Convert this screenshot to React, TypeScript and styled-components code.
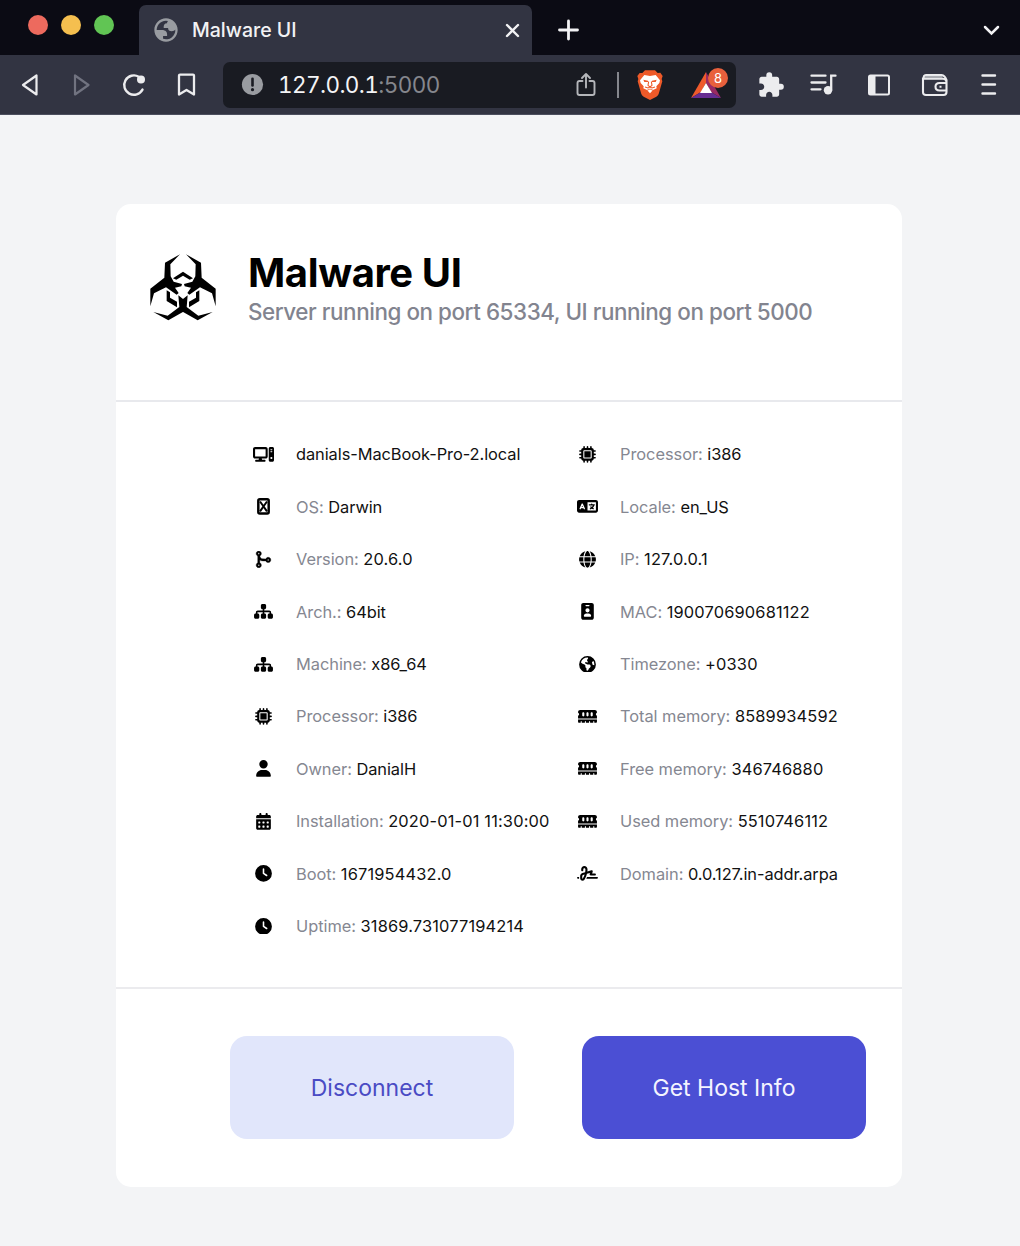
import React from "react";
import styled, { createGlobalStyle } from "styled-components";
import {
  FaComputer, FaCodeMerge, FaSitemap, FaMicrochip, FaUser, FaCalendarDays, FaClock,
  FaLanguage, FaGlobe, FaIdBadge, FaEarthAmericas, FaMemory, FaSignature,
} from "react-icons/fa6";
import { MdExtension } from "react-icons/md";

const GlobalStyle = createGlobalStyle`
  * { box-sizing: border-box; }
  html, body { margin: 0; background: #f3f4f6; }
  body { font-family: Inter, "Liberation Sans", sans-serif; }
`;

const Window = styled.div`
  width: 1020px;
  height: 1246px;
  display: flex;
  flex-direction: column;
  overflow: hidden;
  background: #f3f4f6;
`;

const TabStrip = styled.div`
  height: 55px;
  display: flex;
  align-items: flex-start;
  background: #0b0b14;
  color: #f2f2f4;
`;

const Lights = styled.div`
  display: flex;
  gap: 13px;
  width: 139px;
  padding: 15px 0 0 28px;
`;

const Light = styled.span<{ $color: string }>`
  width: 20px;
  height: 20px;
  border-radius: 50%;
  background: ${(p) => p.$color};
`;

const Tab = styled.div`
  width: 393px;
  height: 50px;
  margin-top: 5px;
  padding: 0 12px 0 13px;
  display: flex;
  align-items: center;
  border-radius: 7px 7px 0 0;
  background: #323442;
`;

const TabTitle = styled.span`
  flex: 1;
  margin-left: 12px;
  font-size: 19.5px;
  font-weight: 500;
`;

const StripActions = styled.div`
  flex: 1;
  height: 60px;
  padding: 0 20px 0 25px;
  display: flex;
  align-items: center;
  justify-content: space-between;
`;

const Toolbar = styled.div`
  height: 60px;
  display: flex;
  align-items: center;
  background: #323442;
  border-bottom: 1px solid #4c4f5e;
  color: #ececee;
`;

const NavGroup = styled.div`
  width: 223px;
  padding-left: 18px;
  display: flex;
  gap: 27px;
`;

const AddressBar = styled.div`
  width: 513px;
  height: 46px;
  padding: 0 5px 0 18px;
  display: flex;
  align-items: center;
  border-radius: 7px;
  background: #191b22;
`;

const Url = styled.span`
  flex: 1;
  margin-left: 14px;
  font-size: 22.5px;
  font-variant-numeric: tabular-nums;
  letter-spacing: -0.6px;
  color: #f4f4f6;
`;

const Port = styled.span`
  color: #85878d;
`;

const Divider = styled.span`
  width: 2px;
  height: 26px;
  margin: 0 18px 0 21px;
  background: #85878d;
`;

const Rewards = styled.div`
  position: relative;
  width: 40px;
  height: 34px;
  margin-left: 28px;
`;

const Badge = styled.span`
  position: absolute;
  top: 0;
  left: 17px;
  width: 20px;
  height: 20px;
  border-radius: 50%;
  background: #e8603c;
  color: #fff;
  font-size: 13px;
  line-height: 20px;
  text-align: center;
`;

const ToolGroup = styled.div`
  flex: 1;
  padding: 0 6px 0 9px;
  display: flex;
`;

const ToolCell = styled.span<{ $nudge?: number }>`
  flex: 1;
  height: 34px;
  padding-right: ${(p) => p.$nudge ?? 0}px;
  display: flex;
  align-items: center;
  justify-content: center;
`;

const Page = styled.main`
  flex: 1;
  padding: 89px 118px 0 116px;
`;

const Card = styled.section`
  height: 983px;
  display: flex;
  flex-direction: column;
  border-radius: 15px;
  background: #fff;
`;

const CardHeader = styled.header`
  height: 198px;
  padding: 48px 0 0 32px;
  display: flex;
  border-bottom: 2px solid #e8e9ed;
`;

const Logo = styled.svg`
  width: 70px;
  height: 70px;
  margin-top: 1px;
`;

const Heading = styled.div`
  margin-left: 30px;
`;

const Title = styled.h1`
  margin: 0;
  font-size: 40px;
  line-height: 42px;
  font-weight: 700;
  letter-spacing: -0.4px;
  color: #000;
`;

const Subtitle = styled.p`
  margin: 3px 0 0;
  font-size: 22.4px;
  line-height: 30px;
  font-weight: 450;
  letter-spacing: -0.43px;
  color: #82848f;
  white-space: nowrap;
`;

const Details = styled.div`
  height: 587px;
  padding: 26.3px 0 0 131px;
  display: grid;
  grid-template-columns: 324px 1fr;
  align-items: start;
  border-bottom: 2px solid #ebebee;
`;

const Row = styled.div`
  height: 52.4px;
  display: flex;
  align-items: center;
  font-size: 16.4px;
  white-space: nowrap;
  color: #111;
`;

const IconCell = styled.span`
  width: 32px;
  margin-right: 17px;
  display: flex;
  justify-content: center;
  color: #000;
  svg { height: 16.8px; width: 21px; }
`;

const Label = styled.span`
  margin-right: 4.6px;
  letter-spacing: -0.04px;
  color: #858791;
`;

const Value = styled.span<{ $numeric: boolean }>`
  letter-spacing: ${(p) => (p.$numeric ? "0.16px" : "-0.07px")};
`;

const Actions = styled.footer`
  flex: 1;
  padding: 47px 36px 0 114px;
  display: flex;
  justify-content: space-between;
`;

const Button = styled.button<{ $primary?: boolean }>`
  width: 284px;
  height: 103px;
  padding: 0;
  border: 0;
  border-radius: 17px;
  font-family: inherit;
  font-size: 23px;
  background: ${(p) => (p.$primary ? "#4b4fd4" : "#e1e6fb")};
  color: ${(p) => (p.$primary ? "#f4f4ff" : "#4a4bc4")};
`;

const Biohazard = () => (
  <Logo viewBox="24 24 210 210">
    <defs>
      <g id="half">
        <path d="M120 28L75 53L73 98L31 131L31 184L42 145L78 127L110 149L116 144L105 128L124 124L126 117L101 110L92 94L91 58Z" />
        <path d="M80 136L90 142V158L111 170V187L80 168Z" />
        <path d="M99 100L129 80V92L109 104Z" />
        <path d="M40 201L85 226L130 200V163L115 151L118 186L83 212Z" />
      </g>
    </defs>
    <use href="#half" />
    <use href="#half" transform="translate(258 0) scale(-1 1)" />
  </Logo>
);

const BoxedX = () => (
  <svg viewBox="0 0 26 34">
    <rect x="2.500" y="2.500" width="21" height="29" rx="3" fill="none" stroke="currentColor" strokeWidth="5" />
    <path d="M6 7L20 27M20 7L6 27" fill="none" stroke="currentColor" strokeWidth="4" />
  </svg>
);

const Globe = () => (
  <svg width="28" height="28" viewBox="0 0 24 24">
    <path
      fill="#999ca1"
      fillRule="evenodd"
      d="M12 2C6.480 2 2 6.480 2 12s4.480 10 10 10 10-4.480 10-10S17.520 2 12 2zM4 12h4.400c3.407.022 4.922 1.730 4.543 5.127H9.488v2.470a8.004 8.004 0 0 0 10.498-8.080C19.327 12.500 18.332 13 17 13c-2.137 0-3.206-.916-3.206-2.750h-3.748c-.274-2.728.683-4.092 2.870-4.092 0-.975.327-1.597.811-1.970A8.004 8.004 0 0 0 4 12z"
    />
  </svg>
);

const Back = ({ dim }: { dim?: boolean }) => (
  <svg width="24" height="26" viewBox="0 0 24 26" fill="none" stroke={dim ? "#717380" : "#ececee"} strokeWidth="2.200" strokeLinejoin="round">
    <path d={dim ? "M6 3.500V22.500L19.500 13Z" : "M18.500 3.500V22.500L5 13Z"} />
  </svg>
);

const Reload = () => (
  <svg width="28" height="26" viewBox="0 0 28 26">
    <path d="M18.800 4.700A9.700 9.700 0 1 0 22.500 17.600" fill="none" stroke="currentColor" strokeWidth="2.400" strokeLinecap="round" />
    <circle cx="21" cy="7.500" r="4" fill="currentColor" />
  </svg>
);

const Bookmark = () => (
  <svg width="24" height="26" viewBox="0 0 24 26" fill="none" stroke="currentColor" strokeWidth="2.300" strokeLinejoin="round">
    <path d="M4 3.500Q4 2.700 5 2.700H18Q19 2.700 19 3.500V22.500L11.500 18L4 22.500Z" />
  </svg>
);

const Info = () => (
  <svg width="23" height="23" viewBox="0 0 23 23">
    <circle cx="11.500" cy="11.500" r="10.600" fill="#999ca1" />
    <path d="M11.500 5.800V12.500" stroke="#191b22" strokeWidth="2.600" strokeLinecap="round" />
    <circle cx="11.500" cy="16.700" r="1.600" fill="#191b22" />
  </svg>
);

const Share = () => (
  <svg width="20" height="26" viewBox="0 0 20 26" fill="none" stroke="#b4b6ba" strokeWidth="1.900" strokeLinejoin="round" strokeLinecap="round">
    <path d="M6.500 9H3.500Q1.500 9 1.500 11V21Q1.500 23 3.500 23H16.500Q18.500 23 18.500 21V11Q18.500 9 16.500 9H13.500" />
    <path d="M10 15.500V2.500M6 6L10 2L14 6" />
  </svg>
);

const Lion = () => (
  <svg width="26" height="30" viewBox="0 0 78 90">
    <path d="M24 1H54L62 9L70 8L77 18L74 27L76 34L65 72Q63 77 58 80L39 90L20 80Q15 77 13 72L2 34L4 27L1 18L8 9L16 9Z" fill="#ee5a29" />
    <path d="M22 15L39 18L56 15L69 31L67 39L58 49L59 55L48 60L39 70L30 60L19 55L20 49L11 39L9 31Z" fill="#fff" />
    <path d="M19 29L33 32L34 36L22 36ZM59 29L45 32L44 36L56 36Z" fill="#ee5a29" />
    <path d="M35 35L33 46L39 51L45 46L43 35M24 51L33 54L39 51L45 54L54 51" fill="none" stroke="#ee5a29" strokeWidth="3.200" />
    <path d="M30 61L39 57L48 61" fill="none" stroke="#ee5a29" strokeWidth="2.400" />
  </svg>
);

const Triangle = () => (
  <svg width="30" height="27" viewBox="0 0 30 27" style={{ marginTop: 4 }}>
    <path d="M15 0L0 26L10 20L15 11Z" fill="#ee5a2c" />
    <path d="M15 0L30 26L20 20L15 11Z" fill="#9a2a63" />
    <path d="M0 26H30L20 20H10Z" fill="#662d91" />
    <path d="M15 11L9 21H21Z" fill="#fff" />
  </svg>
);

const Playlist = () => (
  <svg width="28" height="24" viewBox="0 0 28 24" fill="none" stroke="currentColor" strokeWidth="2.300" strokeLinecap="round">
    <path d="M2.500 2.700H16.500M2.500 9.500H16.500M2.500 16.300H11.500M26.500 2.700H22.200V17" />
    <circle cx="19" cy="17.300" r="4.200" fill="currentColor" stroke="none" />
  </svg>
);

const SidePanel = () => (
  <svg width="24" height="24" viewBox="0 0 24 24">
    <rect x="2" y="2.500" width="20" height="19" rx="1.500" fill="none" stroke="currentColor" strokeWidth="2" />
    <path d="M2 3H8.500V21H2Z" fill="currentColor" />
  </svg>
);

const Wallet = () => (
  <svg width="28" height="24" viewBox="0 0 28 24" fill="none" stroke="currentColor" strokeWidth="2.100">
    <path d="M3 5.500Q2 2.200 5 2H20.500Q24 2.500 25.500 7V19Q25.500 22 22.500 22H5Q2 22 2 19V4.500M2.500 5.800H22Q25.500 6 25.500 10" />
    <path d="M4 4H21.500" stroke="#aaacb2" />
    <path d="M26 10H18.500Q14.500 10 14.500 13.700T18.500 17.500H26M18.500 13.800H20.500" />
  </svg>
);

const Menu = () => (
  <svg width="18" height="24" viewBox="0 0 18 24" stroke="currentColor" strokeWidth="2.400" strokeLinecap="round">
    <path d="M3.500 2.500H16M3.500 11.500H16M3.500 20.500H16" />
  </svg>
);

type Item = { icon: React.ReactNode; label?: string; value: string };

const left: Item[] = [
  { icon: <FaComputer />, value: "danials-MacBook-Pro-2.local" },
  { icon: <BoxedX />, label: "OS:", value: "Darwin" },
  { icon: <FaCodeMerge stroke="currentColor" strokeWidth={10} />, label: "Version:", value: "20.6.0" },
  { icon: <FaSitemap />, label: "Arch.:", value: "64bit" },
  { icon: <FaSitemap />, label: "Machine:", value: "x86_64" },
  { icon: <FaMicrochip />, label: "Processor:", value: "i386" },
  { icon: <FaUser />, label: "Owner:", value: "DanialH" },
  { icon: <FaCalendarDays />, label: "Installation:", value: "2020-01-01 11:30:00" },
  { icon: <FaClock />, label: "Boot:", value: "1671954432.0" },
  { icon: <FaClock />, label: "Uptime:", value: "31869.731077194214" },
];

const right: Item[] = [
  { icon: <FaMicrochip />, label: "Processor:", value: "i386" },
  { icon: <FaLanguage />, label: "Locale:", value: "en_US" },
  { icon: <FaGlobe />, label: "IP:", value: "127.0.0.1" },
  { icon: <FaIdBadge />, label: "MAC:", value: "190070690681122" },
  { icon: <FaEarthAmericas />, label: "Timezone:", value: "+0330" },
  { icon: <FaMemory />, label: "Total memory:", value: "8589934592" },
  { icon: <FaMemory />, label: "Free memory:", value: "346746880" },
  { icon: <FaMemory />, label: "Used memory:", value: "5510746112" },
  { icon: <FaSignature />, label: "Domain:", value: "0.0.127.in-addr.arpa" },
];

const DetailList = ({ items }: { items: Item[] }) => (
  <div>
    {items.map((item, i) => (
      <Row key={i}>
        <IconCell>{item.icon}</IconCell>
        {item.label && <Label>{item.label}</Label>}
        <Value $numeric={!/[a-z]/i.test(item.value)}>{item.value}</Value>
      </Row>
    ))}
  </div>
);

export default function App() {
  return (
    <Window>
      <GlobalStyle />
      <TabStrip>
        <Lights>
          <Light $color="#ed6a5e" />
          <Light $color="#f5bf4f" />
          <Light $color="#61c554" />
        </Lights>
        <Tab>
          <Globe />
          <TabTitle>Malware UI</TabTitle>
          <svg width="15" height="15" viewBox="0 0 15 15" stroke="#f2f2f4" strokeWidth="2.400" strokeLinecap="round">
            <path d="M2 2L13 13M13 2L2 13" />
          </svg>
        </Tab>
        <StripActions>
          <svg width="22" height="22" viewBox="0 0 22 22" stroke="currentColor" strokeWidth="2.800" strokeLinecap="round">
            <path d="M11.500 2V20M2.500 11H20.500" />
          </svg>
          <svg width="17" height="12" viewBox="0 0 17 12" fill="none" stroke="currentColor" strokeWidth="2.500" strokeLinecap="round">
            <path d="M2 3L8.500 9.500L15 3" />
          </svg>
        </StripActions>
      </TabStrip>
      <Toolbar>
        <NavGroup>
          <Back />
          <Back dim />
          <Reload />
          <Bookmark />
        </NavGroup>
        <AddressBar>
          <Info />
          <Url>127.0.0.1<Port>:5000</Port></Url>
          <Share />
          <Divider />
          <Lion />
          <Rewards>
            <Triangle />
            <Badge>8</Badge>
          </Rewards>
        </AddressBar>
        <ToolGroup>
          <ToolCell><MdExtension size={28} /></ToolCell>
          <ToolCell $nudge={4}><Playlist /></ToolCell>
          <ToolCell $nudge={4}><SidePanel /></ToolCell>
          <ToolCell $nudge={1}><Wallet /></ToolCell>
          <ToolCell><Menu /></ToolCell>
        </ToolGroup>
      </Toolbar>
      <Page>
        <Card>
          <CardHeader>
            <Biohazard />
            <Heading>
              <Title>Malware UI</Title>
              <Subtitle>Server running on port 65334, UI running on port 5000</Subtitle>
            </Heading>
          </CardHeader>
          <Details>
            <DetailList items={left} />
            <DetailList items={right} />
          </Details>
          <Actions>
            <Button>Disconnect</Button>
            <Button $primary>Get Host Info</Button>
          </Actions>
        </Card>
      </Page>
    </Window>
  );
}
